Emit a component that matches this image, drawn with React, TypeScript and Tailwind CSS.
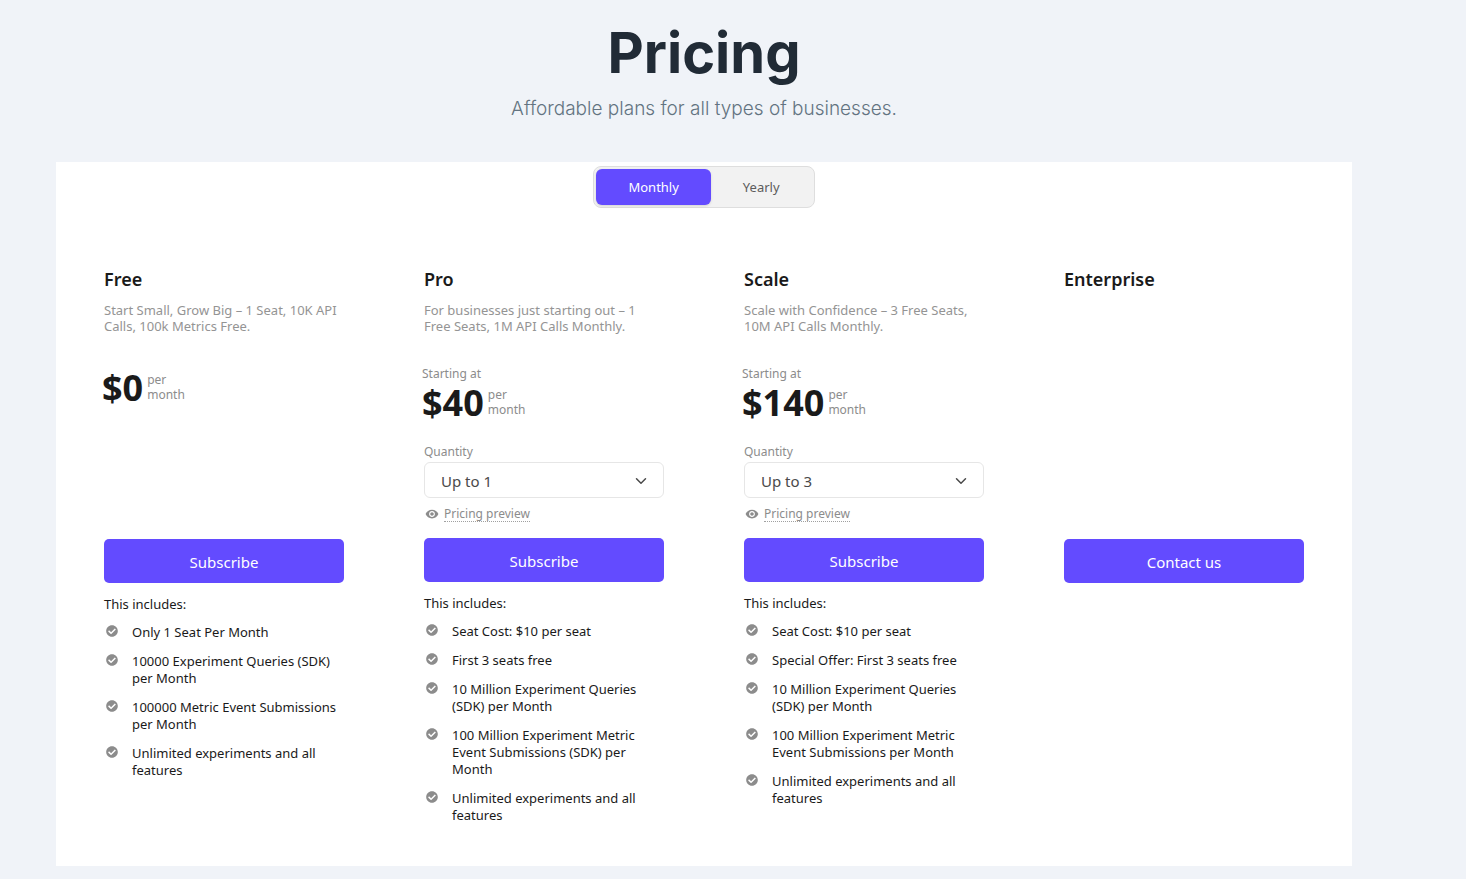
import { useState } from 'react'
import { MdVisibility } from 'react-icons/md'
import { FaCheckCircle } from 'react-icons/fa'
import { ChevronDown } from 'lucide-react'

type Billing = 'monthly' | 'yearly'

interface Plan {
  id: string
  name: string
  description?: string
  price?: string
  quantities?: number[]
  cta: string
  features: string[]
}

const plans: Plan[] = [
  {
    id: 'free',
    name: 'Free',
    description: 'Start Small, Grow Big – 1 Seat, 10K API Calls, 100k Metrics Free.',
    price: '$0',
    cta: 'Subscribe',
    features: [
      'Only 1 Seat Per Month',
      '10000 Experiment Queries (SDK) per Month',
      '100000 Metric Event Submissions per Month',
      'Unlimited experiments and all features',
    ],
  },
  {
    id: 'pro',
    name: 'Pro',
    description: 'For businesses just starting out – 1 Free Seats, 1M API Calls Monthly.',
    price: '$40',
    quantities: [1, 5, 10],
    cta: 'Subscribe',
    features: [
      'Seat Cost: $10 per seat',
      'First 3 seats free',
      '10 Million Experiment Queries (SDK) per Month',
      '100 Million Experiment Metric Event Submissions (SDK) per Month',
      'Unlimited experiments and all features',
    ],
  },
  {
    id: 'scale',
    name: 'Scale',
    description: 'Scale with Confidence – 3 Free Seats, 10M API Calls Monthly.',
    price: '$140',
    quantities: [3, 5, 10],
    cta: 'Subscribe',
    features: [
      'Seat Cost: $10 per seat',
      'Special Offer: First 3 seats free',
      '10 Million Experiment Queries (SDK) per Month',
      '100 Million Experiment Metric Event Submissions per Month',
      'Unlimited experiments and all features',
    ],
  },
  {
    id: 'enterprise',
    name: 'Enterprise',
    cta: 'Contact us',
    features: [],
  },
]

function BillingToggle({ value, onChange }: { value: Billing; onChange: (b: Billing) => void }) {
  const base = 'h-9 rounded-md px-8 pt-0.5 text-[13px]'
  const on = 'bg-[#634bff] text-white shadow-sm'
  const off = 'text-[#5c5c5c]'
  return (
    <div className="flex rounded-lg border border-[#dedede] bg-[#f2f2f2] p-0.5">
      <button
        type="button"
        aria-pressed={value === 'monthly'}
        onClick={() => onChange('monthly')}
        className={`${base} ${value === 'monthly' ? on : off}`}
      >
        Monthly
      </button>
      <button
        type="button"
        aria-pressed={value === 'yearly'}
        onClick={() => onChange('yearly')}
        className={`${base} ${value === 'yearly' ? on : off}`}
      >
        Yearly
      </button>
    </div>
  )
}

function QuantityPicker({ id, options }: { id: string; options: number[] }) {
  const [quantity, setQuantity] = useState(options[0])
  return (
    <div className="mt-[19px]">
      <label htmlFor={`quantity-${id}`} className="block text-xs leading-4 text-[#8c8c8c]">
        Quantity
      </label>
      <div className="relative mt-0.5">
        <select
          id={`quantity-${id}`}
          value={quantity}
          onChange={(e) => setQuantity(Number(e.target.value))}
          className="block h-9 w-full appearance-none rounded-md border border-[#e6e6e6] bg-white px-4 pt-0.5 text-[15px] text-[#4a4a4a]"
        >
          {options.map((n) => (
            <option key={n} value={n}>
              Up to {n}
            </option>
          ))}
        </select>
        <ChevronDown
          size={18}
          className="pointer-events-none absolute top-[10px] right-[14px] text-[#4a4a4a]"
        />
      </div>
      <div className="mt-2 flex h-4 items-center gap-[5px] pl-px text-[#8c8c8c]">
        <MdVisibility size={14} />
        <button
          type="button"
          className="border-b border-dotted border-[#a0a0a0] text-xs leading-[14px]"
        >
          Pricing preview
        </button>
      </div>
    </div>
  )
}

function PlanColumn({ plan }: { plan: Plan }) {
  return (
    <section>
      <div className={plan.quantities ? 'pb-4' : 'min-h-[272px] pb-4'}>
        <h2 className="text-lg leading-6 font-semibold text-[#1a1a1a]">{plan.name}</h2>
        {plan.description && (
          <p className="mt-[11px] text-[13px] leading-4 text-[#949494]">{plan.description}</p>
        )}
        {plan.price && (
          <div className="mt-8 -ml-0.5">
            {plan.quantities && (
              <p className="text-xs leading-[15px] text-[#8c8c8c]">Starting at</p>
            )}
            <div className="flex h-11 items-center gap-1">
              <span className="text-4xl leading-none font-bold text-[#1a1a1a]">{plan.price}</span>
              <span className="w-10 pb-0.5 text-xs leading-[15px] text-[#8c8c8c]">per month</span>
            </div>
          </div>
        )}
        {plan.quantities && <QuantityPicker id={plan.id} options={plan.quantities} />}
      </div>

      <button
        type="button"
        className="h-11 w-full rounded-[5px] bg-[#634bff] pt-0.5 text-[15px] text-white hover:bg-[#553eea]"
      >
        {plan.cta}
      </button>

      {plan.features.length > 0 && (
        <div className="mt-[13px] text-[13px] leading-[17px] text-[#1a1a1a]">
          <p>This includes:</p>
          <ul className="mt-[11px] space-y-3">
            {plan.features.map((feature) => (
              <li key={feature} className="flex gap-[14px] pl-0.5">
                <FaCheckCircle size={12} className="mt-px shrink-0 text-[#8c8c8c]" />
                <span>{feature}</span>
              </li>
            ))}
          </ul>
        </div>
      )}
    </section>
  )
}

export default function App() {
  const [billing, setBilling] = useState<Billing>('monthly')

  return (
    <main className="min-h-screen bg-[#f0f3f8] pt-[25px] pr-[114px] pb-3 pl-14">
      <header className="text-center font-['Inter',sans-serif]">
        <h1 className="text-[56px] leading-14 font-bold text-[#212b36]">Pricing</h1>
        <p className="mt-4 text-[19px] leading-6 font-light text-[#637381]">
          Affordable plans for all types of businesses.
        </p>
      </header>

      <div className="mt-[41px] bg-white px-12 pt-1 pb-[42px] font-['Noto_Sans',sans-serif]">
        <div className="flex justify-center">
          <BillingToggle value={billing} onChange={setBilling} />
        </div>
        <div className="mt-[59px] grid grid-cols-4 gap-20">
          {plans.map((plan) => (
            <PlanColumn key={plan.id} plan={plan} />
          ))}
        </div>
      </div>
    </main>
  )
}
